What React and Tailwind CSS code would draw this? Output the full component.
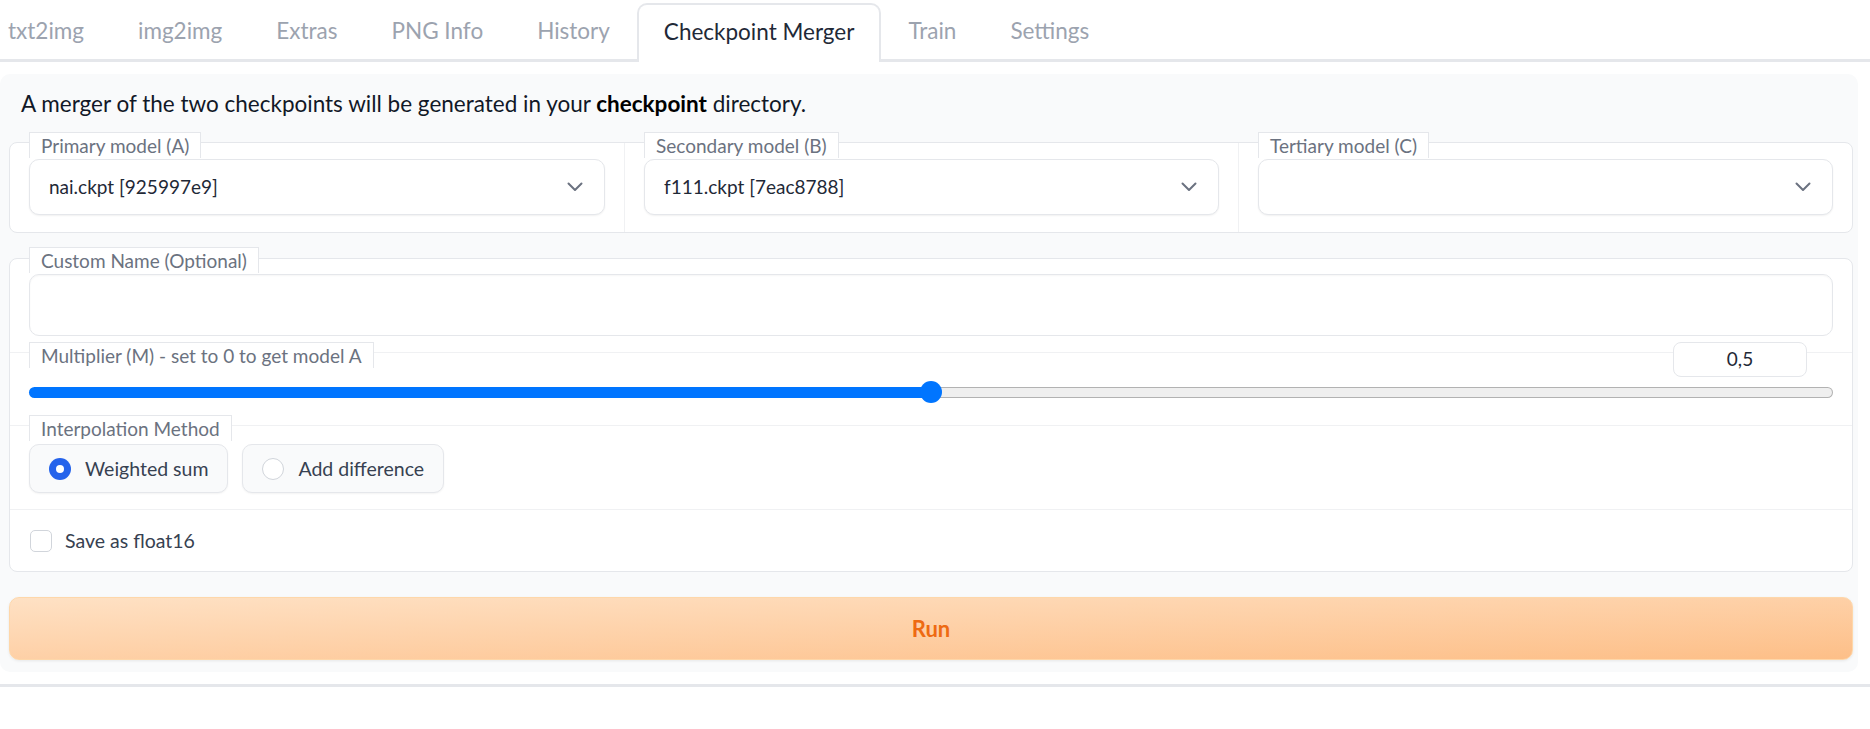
import React from "react";

const TABS = ["txt2img", "img2img", "Extras", "PNG Info", "History", "Checkpoint Merger", "Train", "Settings"];
const ACTIVE = "Checkpoint Merger";

function Chevron() {
  return (
    <svg width="16" height="10" viewBox="0 0 16 10" fill="none" className="shrink-0">
      <path d="M1.5 1.5 L8 8 L14.5 1.5" stroke="#6b7280" strokeWidth="2" strokeLinecap="round" strokeLinejoin="round" />
    </svg>
  );
}

function Label({ children, className = "" }) {
  return (
    <div className={`self-start h-[26px] px-[11px] bg-white border border-b-0 border-[#e5e7eb] text-[19px] leading-[26px] text-[#6b7280] ${className}`}>
      {children}
    </div>
  );
}

function Select({ value }) {
  return (
    <div className="mt-px h-[56px] flex items-center justify-between pl-[19px] pr-[21px] bg-white border border-[#e5e7eb] rounded-[10px] shadow-[0_1px_2px_rgba(0,0,0,0.06)]">
      <span className="text-[19px] text-[#1f2937]">{value}</span>
      <Chevron />
    </div>
  );
}

function ModelColumn({ label, value, divider }) {
  return (
    <div className={`flex flex-col px-[19px] pb-[17px] ${divider ? "border-l border-[#f0f1f3]" : ""}`}>
      <Label className="-mt-[11px]">{label}</Label>
      <Select value={value} />
    </div>
  );
}

function Radio({ label, checked }) {
  return (
    <div className="h-[49px] flex items-center gap-[14px] pl-[19px] pr-[19px] bg-[#f9fafb] border border-[#e5e7eb] rounded-[10px] shadow-[0_1px_2px_rgba(0,0,0,0.05)]">
      {checked ? (
        <div className="w-[22px] h-[22px] rounded-full bg-[#2563eb] flex items-center justify-center">
          <div className="w-[8px] h-[8px] rounded-full bg-white" />
        </div>
      ) : (
        <div className="w-[22px] h-[22px] rounded-full bg-white border border-[#d1d5db]" />
      )}
      <span className="text-[19.5px] text-[#374151]">{label}</span>
    </div>
  );
}

export default function App() {
  const value = 0.5;
  return (
    <div className="w-[1870px] h-[729px] overflow-hidden bg-white" style={{ fontFamily: "Lato, 'Liberation Sans', sans-serif" }}>
      {/* tabs */}
      <div className="h-[62px] flex items-end border-b-[3px] border-[#e5e7eb]">
        {TABS.map((t, i) =>
          t === ACTIVE ? (
            <div
              key={t}
              className="h-[59px] -mb-[3px] px-[25px] pb-[3px] flex items-center bg-white border-2 border-b-0 border-[#e5e7eb] rounded-t-[10px] text-[22.5px] text-[#1f2937]"
            >
              {t}
            </div>
          ) : (
            <div
              key={t}
              className={`h-[56px] flex items-center text-[22.5px] text-[#9ca3af] ${i === 0 ? "pl-[8px] pr-[27px]" : "px-[27px]"}`}
            >
              {t}
            </div>
          )
        )}
      </div>

      {/* panel */}
      <div className="mt-[12px] w-[1858px] bg-[#f9fafb] rounded-[10px] pl-[9px] pr-[5px] pt-[16px] pb-[12px]">
        <p className="pl-[12px] text-[22.5px] leading-[28px] text-[#111827]">
          A merger of the two checkpoints will be generated in your <b className="text-black">checkpoint</b> directory.
        </p>

        {/* models */}
        <div className="mt-[24px] grid grid-cols-3 bg-white border border-[#e5e7eb] rounded-[8px]">
          <ModelColumn label="Primary model (A)" value="nai.ckpt [925997e9]" />
          <ModelColumn label="Secondary model (B)" value="f111.ckpt [7eac8788]" divider />
          <ModelColumn label="Tertiary model (C)" value="" divider />
        </div>

        {/* options */}
        <div className="mt-[25px] flex flex-col bg-white border border-[#e5e7eb] rounded-[8px]">
          <div className="flex flex-col px-[19px] pb-[16px]">
            <Label className="-mt-[12px]">Custom Name (Optional)</Label>
            <div className="mt-px h-[62px] bg-white border border-[#e5e7eb] rounded-[10px] shadow-[inset_0_1px_2px_rgba(0,0,0,0.04)]" />
          </div>

          <div className="flex flex-col pl-[19px] pr-[12px] pb-[22px] border-t border-[#f0f1f3]">
            <div className="-mt-[11px] flex items-start justify-between">
              <Label>Multiplier (M) - set to 0 to get model A</Label>
              <div className="mr-[33px] w-[134px] h-[35px] flex items-center justify-center bg-white border border-[#e5e7eb] rounded-[8px] text-[19px] text-[#1f2937]">
                0,5
              </div>
            </div>
            <div className="mt-[4px] mr-[7px] relative h-[22px] flex items-center">
              <div className="flex-1 h-[11px] flex">
                <div className="h-full bg-[#0075ff] rounded-l-full" style={{ width: `${value * 100}%` }} />
                <div className="h-full flex-1 bg-[#efefef] border border-[#b2b2b2] border-l-0 rounded-r-full" />
              </div>
              <div
                className="absolute top-0 w-[22px] h-[22px] -ml-[11px] rounded-full bg-[#0075ff]"
                style={{ left: `${value * 100}%` }}
              />
            </div>
          </div>

          <div className="flex flex-col px-[19px] pb-[16px] border-t border-[#f0f1f3]">
            <Label className="-mt-[11px]">Interpolation Method</Label>
            <div className="mt-[3px] flex gap-[14px]">
              <Radio label="Weighted sum" checked />
              <Radio label="Add difference" />
            </div>
          </div>

          <div className="flex items-center gap-[13px] px-[20px] h-[62px] border-t border-[#f0f1f3]">
            <div className="w-[22px] h-[22px] bg-white border border-[#d1d5db] rounded-[5px]" />
            <span className="text-[19.5px] text-[#374151]">Save as float16</span>
          </div>
        </div>

        {/* run */}
        <button className="mt-[25px] w-full h-[63px] flex items-center justify-center rounded-[10px] border border-[#fed7aa] bg-gradient-to-br from-[#fee1c4] to-[#fdbf88] shadow-[0_1px_3px_rgba(0,0,0,0.08)] text-[22px] font-bold text-[#ee6a12]">
          Run
        </button>
      </div>

      <div className="mt-[12px] h-[3px] bg-[#e5e7eb]" />
    </div>
  );
}
